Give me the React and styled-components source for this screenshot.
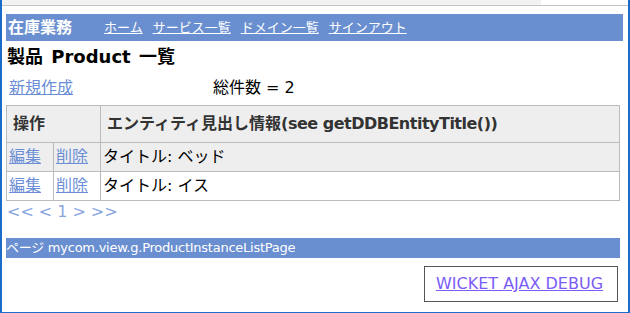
import React from 'react';
import styled, { createGlobalStyle } from 'styled-components';

const Global = createGlobalStyle`
  html, body { margin: 0; padding: 0; background: #fff; }
  body { font-family: "DejaVu Sans", "Noto Sans CJK JP", sans-serif; color: #000; }
`;

const BLUE = '#6a8fd0';
const LINK = '#6b8ed6';

const Frame = styled.div`
  width: 630px;
  height: 313px;
  box-sizing: border-box;
  border-left: 2px solid #1a6cc8;
  border-right: 2px solid #1a6cc8;
  border-bottom: 1px solid #1a6cc8;
  display: flex;
  flex-direction: column;
  overflow: hidden;
`;

const TopStrip = styled.div`
  height: 5px;
  flex: none;
  background: linear-gradient(to right, #f2f2f2 0, #f2f2f2 539px, #fff 539px);
  border-bottom: 1px solid #c4c4c4;
`;

const Content = styled.div`
  flex: 1;
  display: flex;
  flex-direction: column;
  padding: 8px 5px 0 4px;
`;

const HeaderBar = styled.div`
  height: 27px;
  background: ${BLUE};
  display: flex;
  align-items: center;
  padding-left: 2px;
`;

const Brand = styled.span`
  font-size: 16px;
  font-weight: bold;
  color: #fff;
  line-height: 27px;
  margin-right: 32px;
`;

const NavLink = styled.a`
  font-size: 13px;
  color: #fff;
  text-decoration: underline;
  line-height: 27px;
  margin-right: 10px;
  cursor: pointer;
`;

const Heading = styled.h1`
  margin: 4px 0 0 1px;
  font-size: 18px;
  font-weight: bold;
  line-height: 24px;
  word-spacing: 2px;
`;

const Toolbar = styled.div`
  margin-top: 7px;
  height: 24px;
  display: grid;
  grid-template-columns: 207px 1fr;
  align-items: center;
  font-size: 16px;
  line-height: 24px;
`;

const TextLink = styled.a`
  color: ${LINK};
  text-decoration: underline;
  padding-left: ${p => p.$pad || 0}px;
  cursor: pointer;
`;

const Table = styled.table`
  margin-top: 5px;
  width: 614px;
  border-collapse: collapse;
  table-layout: fixed;
  border: 1px solid #bbb;
  font-size: 16px;
`;

const Th = styled.th`
  background: #eeeeee;
  border: 1px solid #bbb;
  text-align: left;
  font-weight: bold;
  color: #333;
  padding: 0 6px;
  line-height: 36px;
  height: 36px;
  white-space: nowrap;
`;

const Latin = styled.span`
  letter-spacing: -0.5px;
`;

const Row = styled.tr`
  background: ${p => (p.$alt ? '#eeeeee' : '#fff')};
`;

const Td = styled.td`
  border: 1px solid #bbb;
  padding: 0 2px;
  line-height: 28px;
  height: 28px;
  white-space: nowrap;
`;

const Pager = styled.div`
  height: 22px;
  display: flex;
  align-items: center;
  gap: 5px;
  padding-left: 1px;
  font-size: 16px;
  line-height: 22px;
  color: #8aa6e0;
`;

const FooterBar = styled.div`
  margin-top: 15px;
  width: 614px;
  height: 20px;
  background: ${BLUE};
  color: #fff;
  font-size: 13px;
  line-height: 20px;
  white-space: nowrap;
  letter-spacing: -0.25px;
`;

const DebugBox = styled.div`
  margin-top: 8px;
  align-self: flex-end;
  margin-right: 5px;
  width: 194px;
  height: 36px;
  box-sizing: border-box;
  border: 1px solid #555;
  padding-left: 11px;
  display: flex;
  align-items: center;
`;

const DebugLink = styled.a`
  font-size: 16px;
  line-height: 34px;
  color: #7b5cf6;
  text-decoration: underline;
  white-space: nowrap;
  cursor: pointer;
`;

const rows = [
  { title: 'タイトル: ベッド', alt: true },
  { title: 'タイトル: イス', alt: false },
];

export default function App() {
  return (
    <>
      <Global />
      <Frame>
        <TopStrip />
        <Content>
          <HeaderBar>
            <Brand>在庫業務</Brand>
            <NavLink>ホーム</NavLink>
            <NavLink>サービス一覧</NavLink>
            <NavLink>ドメイン一覧</NavLink>
            <NavLink>サインアウト</NavLink>
          </HeaderBar>
          <Heading>製品 Product 一覧</Heading>
          <Toolbar>
            <span><TextLink $pad={3}>新規作成</TextLink></span>
            <span>総件数 = 2</span>
          </Toolbar>
          <Table>
            <colgroup>
              <col style={{ width: 47 }} />
              <col style={{ width: 47 }} />
              <col />
            </colgroup>
            <thead>
              <tr>
                <Th colSpan={2}>操作</Th>
                <Th>エンティティ見出し情報<Latin>(see getDDBEntityTitle())</Latin></Th>
              </tr>
            </thead>
            <tbody>
              {rows.map((r, i) => (
                <Row key={i} $alt={r.alt}>
                  <Td><TextLink>編集</TextLink></Td>
                  <Td><TextLink>削除</TextLink></Td>
                  <Td>{r.title}</Td>
                </Row>
              ))}
            </tbody>
          </Table>
          <Pager>
            <span>&lt;&lt;</span>
            <span>&lt;</span>
            <span>1</span>
            <span>&gt;</span>
            <span>&gt;&gt;</span>
          </Pager>
          <FooterBar>ページ mycom.view.g.ProductInstanceListPage</FooterBar>
          <DebugBox>
            <DebugLink>WICKET AJAX DEBUG</DebugLink>
          </DebugBox>
        </Content>
      </Frame>
    </>
  );
}
